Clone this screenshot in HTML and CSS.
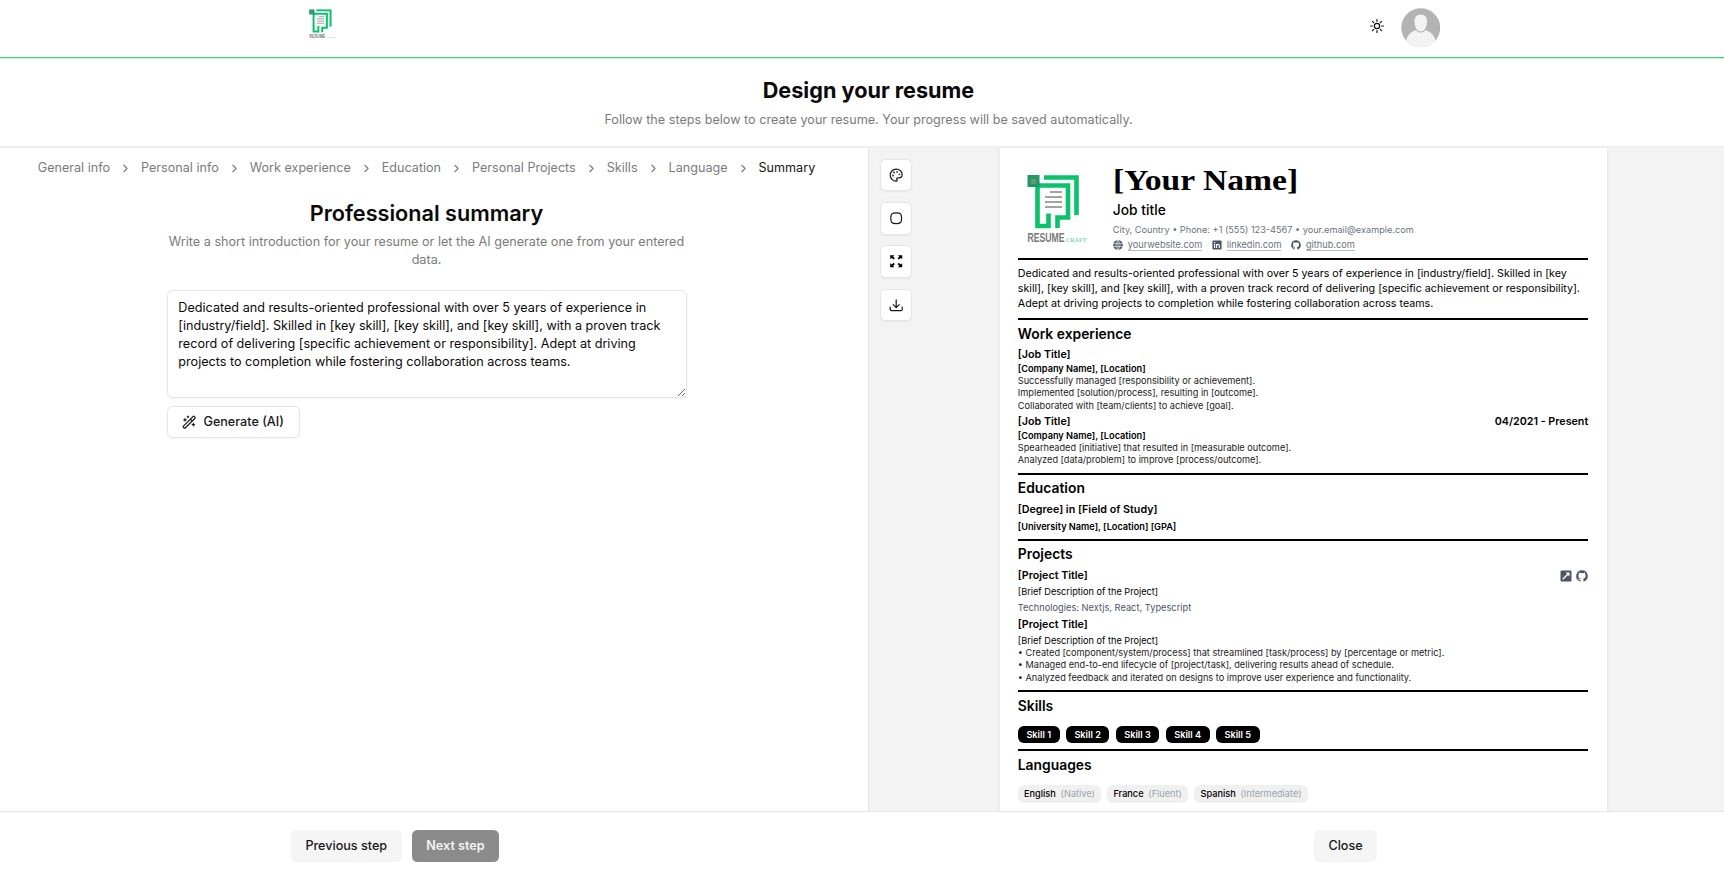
FILE: index.html
```html
<!DOCTYPE html>
<html lang="en">
<head>
<meta charset="utf-8">
<title>Design your resume</title>
<link rel="stylesheet" href="styles.css">
</head>
<body>
<svg width="0" height="0" class="defs">
  <symbol id="mark" viewBox="0 0 62 70">
    <path d="M17 2.5H49.500V40" fill="none" stroke="#09c269" stroke-width="4.6"/>
    <path d="M10 10.500H41V42.500H30.500V53" fill="none" stroke="#09c269" stroke-width="4.6"/>
    <path d="M10.500 8V51H21.500V38.500" fill="none" stroke="#09c269" stroke-width="4.6"/>
    <rect x="0.500" y="0" width="12" height="12" fill="#1f9a60"/>
    <rect x="4" y="4" width="5" height="5" fill="#6f8f80"/>
    <path d="M23 17H35M18 22H35M18 27H35M18 32H35" stroke="#858585" stroke-width="1.700"/>
  </symbol>
  <symbol id="chev" viewBox="0 0 24 24"><path d="m9 18 6-6-6-6" class="line"/></symbol>
  <symbol id="github" viewBox="0 0 24 24"><path fill="currentColor" d="M12 .5a11.500 11.500 0 0 0-3.640 22.410c.580.100.790-.250.790-.560v-2.150c-3.200.700-3.880-1.370-3.880-1.370-.520-1.330-1.280-1.680-1.280-1.680-1.040-.710.080-.700.080-.700 1.150.080 1.760 1.190 1.760 1.190 1.030 1.750 2.690 1.250 3.350.950.100-.740.400-1.250.730-1.540-2.550-.290-5.240-1.280-5.240-5.690 0-1.260.450-2.280 1.190-3.090-.120-.290-.520-1.460.110-3.040 0 0 .970-.310 3.160 1.180a11 11 0 0 1 5.760 0c2.190-1.490 3.160-1.180 3.160-1.180.630 1.580.230 2.750.110 3.040.740.810 1.190 1.830 1.190 3.090 0 4.420-2.700 5.390-5.260 5.680.410.350.780 1.060.780 2.130v3.160c0 .310.210.670.800.560A11.500 11.500 0 0 0 12 .5z"/></symbol>
</svg>
<header class="topbar">
  <svg class="brand" viewBox="0 0 62 70"><use href="#mark" width="62" height="70"/><text x="0.500" y="66.500" class="logo-main" textLength="37" lengthAdjust="spacingAndGlyphs">RESUME</text><text x="39" y="66.500" class="logo-sub" textLength="20.500" lengthAdjust="spacingAndGlyphs">CRAFT</text></svg>
  <div class="topbar-right">
    <svg class="sun" viewBox="0 0 24 24"><g class="line"><circle cx="12" cy="12" r="4.500"/><path d="M12 1v3M12 20v3M4.200 4.200l2.100 2.100M17.700 17.700l2.100 2.100M1 12h3M20 12h3M6.300 17.700l-2.100 2.100M19.800 4.200l-2.100 2.100"/></g></svg>
    <svg class="avatar" viewBox="0 0 40 40"><defs><clipPath id="disc"><circle cx="20" cy="20" r="19.700"/></clipPath></defs><g clip-path="url(#disc)"><rect width="40" height="40" fill="#b3b3b3"/><path d="M5 36c0-8 5-12 10-13.500h10c5 1.500 10 5.500 10 13.500v5H5z" fill="#f3f3f3"/><path d="M13 14c0-5 3-8 7-8s7 3 7 8c0 6-3.500 10.500-7 10.500S13 20 13 14z" fill="#f3f3f3" stroke="#b3b3b3" stroke-width="1.200"/></g></svg>
  </div>
</header>
<section class="intro">
  <h1>Design your resume</h1>
  <p>Follow the steps below to create your resume. Your progress will be saved automatically.</p>
</section>
<main class="workspace">
  <div class="editor">
    <nav class="crumbs">
      <span>General info</span><svg><use href="#chev"/></svg><span>Personal info</span><svg><use href="#chev"/></svg><span>Work experience</span><svg><use href="#chev"/></svg><span>Education</span><svg><use href="#chev"/></svg><span>Personal Projects</span><svg><use href="#chev"/></svg><span>Skills</span><svg><use href="#chev"/></svg><span>Language</span><svg><use href="#chev"/></svg><span class="current">Summary</span>
    </nav>
    <div class="form">
      <h2>Professional summary</h2>
      <p class="hint">Write a short introduction for your resume or let the AI generate one from your entered data.</p>
      <textarea>Dedicated and results-oriented professional with over 5 years of experience in [industry/field]. Skilled in [key skill], [key skill], and [key skill], with a proven track record of delivering [specific achievement or responsibility]. Adept at driving projects to completion while fostering collaboration across teams.</textarea>
      <button class="btn outline"><svg viewBox="0 0 24 24"><g class="line"><path d="m21.640 3.640-1.280-1.280a1.210 1.210 0 0 0-1.720 0L2.360 18.640a1.210 1.210 0 0 0 0 1.720l1.280 1.280a1.200 1.200 0 0 0 1.720 0L21.640 5.360a1.200 1.200 0 0 0 0-1.720M14 7l3 3M5 6v4M19 14v4M10 2v2M7 8H3M21 16h-4M11 3H9"/></g></svg>Generate (AI)</button>
    </div>
  </div>
  <div class="preview">
    <div class="tools">
      <button class="tool"><svg viewBox="0 0 24 24"><g class="line"><path d="M12 2a10 10 0 0 0 0 20c.930 0 1.650-.750 1.650-1.690 0-.440-.180-.830-.440-1.120-.290-.290-.440-.650-.440-1.130a1.640 1.640 0 0 1 1.670-1.670h2c3.050 0 5.550-2.500 5.550-5.550C21.970 6.010 17.460 2 12 2z"/><circle cx="13.500" cy="6.500" r=".5"/><circle cx="17.500" cy="10.500" r=".5"/><circle cx="8.500" cy="7.500" r=".5"/><circle cx="6.500" cy="12.500" r=".5"/></g></svg></button>
      <button class="tool"><svg viewBox="0 0 24 24"><path class="line" d="M12 3c7.200 0 9 1.800 9 9s-1.800 9-9 9-9-1.800-9-9 1.800-9 9-9"/></svg></button>
      <button class="tool"><svg viewBox="0 0 24 24"><path d="M2 2h7L6.900 4.300l2.800 2.800-2.200 2.200-2.900-2.800L2 8.500zM22 2v6.500l-2.600-2-2.900 2.800-2.200-2.200 2.800-2.800L15 2zM2 22v-6.500l2.600 2 2.900-2.800 2.200 2.200-2.800 2.800L9 22zM22 22h-7l2.100-2.300-2.800-2.800 2.200-2.200 2.900 2.800 2.600-2z"/></svg></button>
      <button class="tool"><svg viewBox="0 0 24 24"><path class="line" d="M2 15v4a2 2 0 0 0 2 2h16a2 2 0 0 0 2-2v-4M7 11l5 5 5-5M12 16V3"/></svg></button>
    </div>
    <article class="resume">
      <div class="head">
        <svg class="photo" viewBox="0 0 62 70"><use href="#mark" width="62" height="70"/><text x="0.500" y="66.500" class="logo-main" textLength="37" lengthAdjust="spacingAndGlyphs">RESUME</text><text x="39" y="66.500" class="logo-sub" textLength="20.500" lengthAdjust="spacingAndGlyphs">CRAFT</text></svg>
        <div class="who">
          <div class="name">[Your Name]</div>
          <div class="role">Job title</div>
          <div class="contact">City, Country • Phone: +1 (555) 123-4567 • your.email@example.com</div>
          <div class="links">
            <svg viewBox="0 0 24 24"><circle cx="12" cy="12" r="11.500" fill="currentColor"/><path d="M1 8.500h22M1 15.500h22M12 0v24M12 1C5.500 7 5.500 17 12 23M12 1c6.500 6 6.500 16 0 22" fill="none" stroke="#fff" stroke-width="1.400"/></svg><a>yourwebsite.com</a>
            <svg viewBox="0 0 24 24"><rect x="1" y="1" width="22" height="22" rx="2" fill="currentColor"/><path d="M6.300 9.500V19M11 19V9.500M11 13.500c.5-4 6.500-4 6.500 0V19M6.300 5v2.500" fill="none" stroke="#fff" stroke-width="2.600"/></svg><a>linkedin.com</a>
            <svg><use href="#github"/></svg><a>github.com</a>
          </div>
        </div>
      </div>
      <section class="block summary">Dedicated and results-oriented professional with over 5 years of experience in [industry/field]. Skilled in [key skill], [key skill], and [key skill], with a proven track record of delivering [specific achievement or responsibility]. Adept at driving projects to completion while fostering collaboration across teams.</section>
      <section class="block">
        <h3>Work experience</h3>
        <div class="row">[Job Title]</div>
        <div class="sub">[Company Name], [Location]</div>
        <div class="text">Successfully managed [responsibility or achievement].<br>Implemented [solution/process], resulting in [outcome].<br>Collaborated with [team/clients] to achieve [goal].</div>
        <div class="row next"><span>[Job Title]</span><span>04/2021 - Present</span></div>
        <div class="sub">[Company Name], [Location]</div>
        <div class="text">Spearheaded [initiative] that resulted in [measurable outcome].<br>Analyzed [data/problem] to improve [process/outcome].</div>
      </section>
      <section class="block">
        <h3>Education</h3>
        <div class="row">[Degree] in [Field of Study]</div>
        <div class="sub spaced">[University Name], [Location] [GPA]</div>
      </section>
      <section class="block">
        <h3>Projects</h3>
        <div class="row"><span>[Project Title]</span><span class="marks"><svg viewBox="0 0 24 24"><rect x="1" y="1" width="22" height="22" rx="2.500" fill="currentColor"/><path d="M5.500 18.500 16 8" stroke="#fff" stroke-width="3"/><path d="M11 5h8v8z" fill="#fff"/></svg><svg><use href="#github"/></svg></span></div>
        <div class="desc">[Brief Description of the Project]</div>
        <div class="desc tech">Technologies: Nextjs, React, Typescript</div>
        <div class="row next2">[Project Title]</div>
        <div class="desc">[Brief Description of the Project]</div>
        <div class="text">• Created [component/system/process] that streamlined [task/process] by [percentage or metric].<br>• Managed end-to-end lifecycle of [project/task], delivering results ahead of schedule.<br>• Analyzed feedback and iterated on designs to improve user experience and functionality.</div>
      </section>
      <section class="block">
        <h3>Skills</h3>
        <div class="pills skills"><span>Skill 1</span><span>Skill 2</span><span>Skill 3</span><span>Skill 4</span><span>Skill 5</span></div>
      </section>
      <section class="block">
        <h3>Languages</h3>
        <div class="pills langs"><span>English <i>(Native)</i></span><span>France <i>(Fluent)</i></span><span>Spanish <i>(Intermediate)</i></span></div>
      </section>
    </article>
  </div>
</main>
<footer class="bottom">
  <div class="steps"><button class="btn soft">Previous step</button><button class="btn dark">Next step</button></div>
  <button class="btn soft">Close</button>
</footer>
</body>
</html>
```
FILE: styles.css
```css
* { box-sizing: border-box; margin: 0; }
body { height: 871px; display: flex; flex-direction: column; overflow: hidden; background: #fff; color: #0a0a0a; font: 12.630px/18px Inter, sans-serif; }
.defs { position: absolute; }
.line { fill: none; stroke: currentColor; stroke-width: 2; stroke-linecap: round; stroke-linejoin: round; }
.logo-main { font: bold 13px "Liberation Sans", sans-serif; fill: #777; }
.logo-sub { font: bold 6px "Liberation Serif", serif; fill: #7fd9ae; }
.topbar { flex: none; height: 58px; border-bottom: 1px solid #4ccb80; box-shadow: 0 1px 1px #c9f2d9; display: flex; justify-content: space-between; padding: 8px 284px 0 309px; }
.brand { width: 27px; height: 31px; margin-top: 1px; }
.topbar-right { display: flex; gap: 17px; }
.sun { width: 14px; height: 14px; margin-top: 11px; }
.avatar { width: 39.500px; height: 39.500px; }
.intro { flex: none; height: 90px; padding-top: 18px; text-align: center; border-bottom: 2px solid #efefef; padding-left: 13px; }
h1, h2 { font-size: 21.650px; line-height: 29px; font-weight: 600; }
.intro h1 { font-weight: 700; }
.intro p, .hint { color: #7b7b7b; }
.intro p { margin-top: 5.500px; }
.workspace { flex: none; height: 663px; display: flex; overflow: hidden; }
.editor { width: 869px; border-right: 1px solid #e5e5e5; padding: 11px 15px 0 0; }
.crumbs { display: flex; justify-content: center; align-items: center; gap: 9px; font-size: 12.600px; color: #7b7b7b; }
.crumbs svg { width: 13px; height: 13px; }
.crumbs .current { color: #171717; }
.form { width: 520px; margin: 22px auto 0; display: flex; flex-direction: column; align-items: flex-start; }
.form h2 { align-self: center; }
.hint { text-align: center; margin-top: 5px; }
textarea { display: block; width: 520px; height: 108.500px; margin: 20.500px 0 8px; padding: 8px 10.800px; border: 1px solid #e5e5e5; border-radius: 5.400px; box-shadow: 0 1px 2px #0000000d; font: inherit; color: inherit; background: #fff; outline: none; }
.btn { height: 32.400px; border: 0; border-radius: 5.400px; padding: 0 14.400px; font: 500 12.600px/18px Inter, sans-serif; color: #171717; display: flex; align-items: center; gap: 7.200px; }
.btn svg { width: 14.400px; height: 14.400px; }
.outline { background: #fff; border: 1px solid #e5e5e5; box-shadow: 0 1px 2px #0000000d; padding: 0 14.800px 0 14.400px; }
.soft { background: #f5f5f5; }
.dark { background: #8b8b8b; color: #f4f4f4; font-weight: 600; padding: 0 14px; }
.preview { flex: 1; background: #f3f3f3; display: flex; }
.tools { width: 130.500px; padding: 11px 0 0 11px; display: flex; flex-direction: column; gap: 10.800px; }
.tool { width: 32.400px; height: 32.400px; padding: 0; border: 1px solid #e5e5e5; border-radius: 5.400px; background: #fff; color: #171717; box-shadow: 0 1px 2px #0000000d; display: grid; place-items: center; }
.tool svg { width: 14.400px; height: 14.400px; }
.resume { width: 607px; height: 700px; background: #fff; box-shadow: 0 1px 3px #0000001a; padding: 17px 18.300px; color: #000; }
.head { display: flex; height: 93px; }
.photo { width: 62px; height: 70px; margin: 10px 0 0 9px; }
.who { margin-left: 24px; color: #6b7280; }
.name { font: bold 28.500px/32px "Liberation Serif", serif; color: #000; transform: scaleX(1.180); transform-origin: left; }
.role { font-size: 13.800px; line-height: 20px; margin-top: 3px; font-weight: 500; color: #000; }
.contact { font-size: 9.170px; line-height: 12px; margin-top: 4px; }
.links { font-size: 9.180px; line-height: 11px; margin-top: 3px; display: flex; align-items: center; }
.links svg { width: 10px; height: 10px; color: #4b5563; margin-right: 5px; }
.links a { border-bottom: 1px solid #b8bcc4; margin-right: 9.500px; }
.block { border-top: 2px solid #000; padding: 3.500px 0 6px; }
.summary { font-size: 10.700px; line-height: 15.200px; padding: 6px 0 6.400px; }
h3 { font-size: 13.850px; line-height: 20px; font-weight: 600; margin-bottom: 3px; }
.row { font-size: 10.720px; line-height: 16px; font-weight: 600; display: flex; justify-content: space-between; position: relative; top: .5px; }
.sub { font-size: 9.180px; line-height: 12px; font-weight: 600; }
.spaced { margin-top: 3.500px; }
.text { font-size: 9.180px; line-height: 12.500px; color: #222; }
.next { margin-top: 1.500px; }
.next2 { margin-top: 2.500px; }
.desc { font-size: 9.180px; line-height: 12px; margin-top: 2.500px; }
.tech { color: #4b5563; margin-top: 4px; letter-spacing: .05px; }
.marks { display: flex; gap: 4px; align-items: center; color: #4b5563; }
.marks svg { width: 12px; height: 12px; }
.pills { display: flex; gap: 6.200px; margin-top: 10px; font-size: 9.200px; }
.skills span { background: #000; color: #fff; font-weight: 600; line-height: 17.700px; padding: 0 8.600px; border-radius: 6px; }
.langs span { background: #f0f0f0; font-weight: 500; line-height: 18.700px; padding: 0 6.200px; border-radius: 6px; }
.langs i { font-style: normal; font-weight: 400; color: #9ca3af; margin-left: 2.300px; }
.bottom { flex: 1; border-top: 1px solid #e5e5e5; background: #fff; display: flex; justify-content: space-between; padding: 18px 347px 0 291px; }
.steps { display: flex; gap: 10.800px; }
```
